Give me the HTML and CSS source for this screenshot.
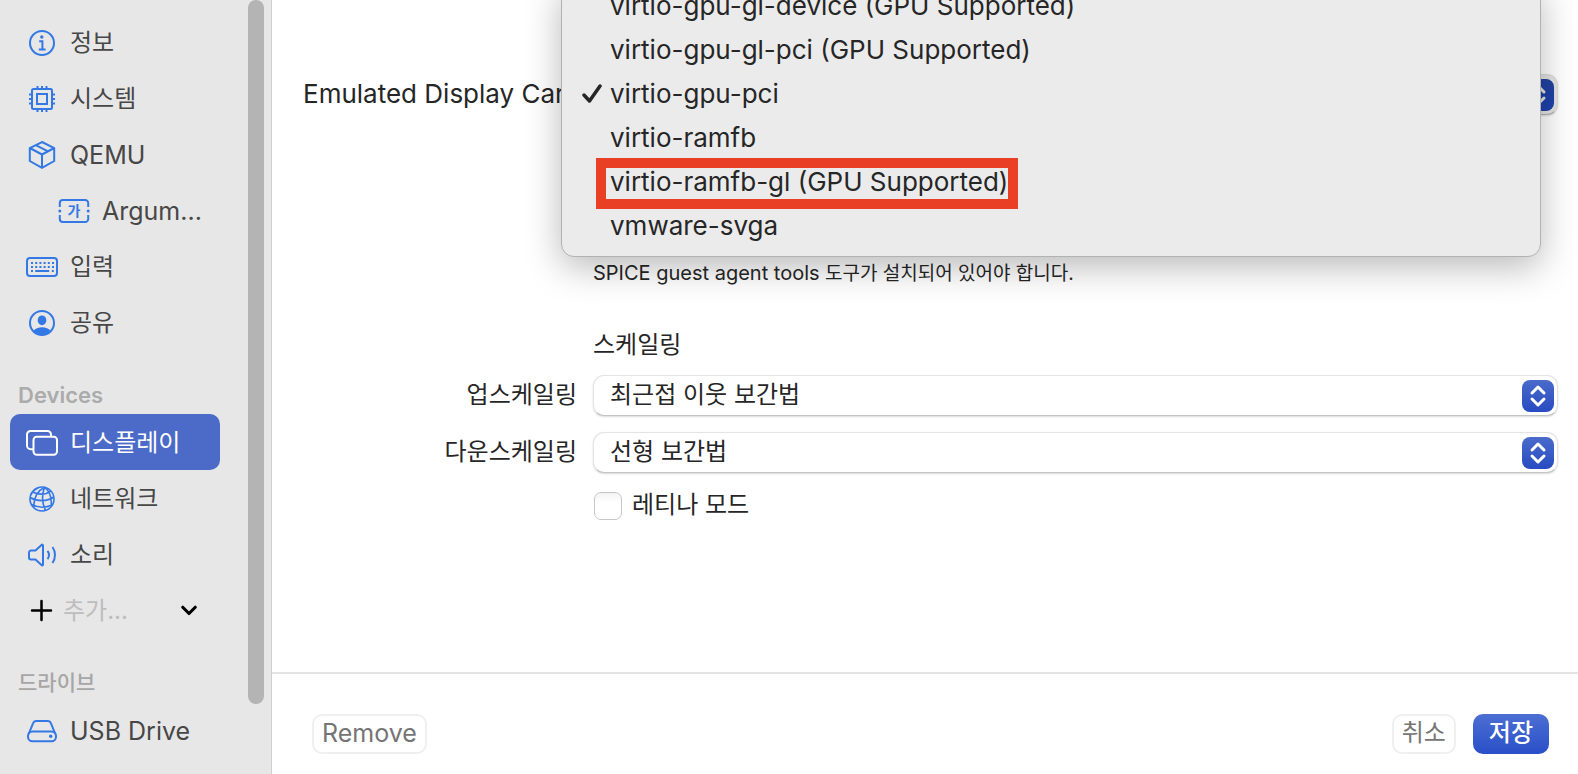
FILE: index.html
```html
<!DOCTYPE html>
<html lang="ko">
<head>
  <meta charset="UTF-8" />
  <meta name="viewport" content="width=device-width, initial-scale=1" />
  <title>디스플레이</title>
  <link rel="stylesheet" href="styles.css">
</head>
<body>

  <aside class="sidebar">
    <nav>
      <a href="#info">
        <svg class="icon" viewBox="0 0 32 32"><circle cx="16" cy="16" r="12"/><circle class="fill" cx="15.8" cy="10" r="1.7"/><path d="M13.2 14.3h3.2v7.6M12.8 22.4h6.8"/></svg>
        <span>정보</span>
      </a>
      <a href="#system">
        <svg class="icon" viewBox="0 0 32 32"><rect x="6" y="6" width="20" height="20" rx="1.5"/><rect x="11" y="11" width="10" height="10"/><path d="M11.5 3v3M16 3v3M20.5 3v3M11.5 26v3M16 26v3M20.5 26v3M3 11.5h3M3 16h3M3 20.5h3M26 11.5h3M26 16h3M26 20.5h3"/></svg>
        <span>시스템</span>
      </a>
      <a href="#qemu">
        <svg class="icon" viewBox="0 0 32 32"><path d="M16 3 28.2 9v13L16 28.8 3.8 22V9ZM3.8 9 16 15.5 28.2 9M16 15.5v13M9.8 6.1 22 12.3"/></svg>
        <span class="latin">QEMU</span>
      </a>
      <a class="child" href="#arguments">
        <svg class="icon" viewBox="0 0 32 32"><path d="M1.8 12V8a3 3 0 0 1 3-3h22.4a3 3 0 0 1 3 3v4M1.8 20v4a3 3 0 0 0 3 3h22.4a3 3 0 0 0 3-3v-4"/><circle class="fill" cx="1.8" cy="16" r="1.5"/><circle class="fill" cx="30.2" cy="16" r="1.5"/><text x="16" y="21">가</text></svg>
        <span class="latin">Argum...</span>
      </a>
      <a href="#input">
        <svg class="icon" viewBox="0 0 32 32"><rect x="1" y="7" width="30" height="18" rx="3"/><path stroke-dasharray="2 2.2" d="M5 12h23M5 16h23"/><path d="M5 20h2M9.2 20h14M25.8 20h2"/></svg>
        <span>입력</span>
      </a>
      <a href="#sharing">
        <svg class="icon" viewBox="0 0 32 32"><circle cx="16" cy="16" r="12"/><ellipse class="fill" cx="16" cy="13.3" rx="4.3" ry="4.9"/><path class="fill" d="M7.5 24c1.5-2.5 5-3.7 8.5-3.7s7 1.2 8.5 3.7A12 12 0 0 1 7.5 24Z"/></svg>
        <span>공유</span>
      </a>

      <h2 class="devices">Devices</h2>
      <a class="active" href="#display">
        <svg class="icon" viewBox="0 0 32 32"><rect x="7.5" y="9.8" width="23.5" height="18" rx="3.2"/><path d="M7 22.2H4.6A3.6 3.6 0 0 1 1 18.6V7.6A3.6 3.6 0 0 1 4.6 4h16.8A3.6 3.6 0 0 1 25 7.6V9"/></svg>
        <span>디스플레이</span>
      </a>
      <a href="#network">
        <svg class="icon thin" viewBox="0 0 32 32"><circle cx="16" cy="16" r="12"/><path d="M18.5 4.2C11 8 7.5 15 7.8 24.5M18.5 4.2c-2.5 7-2.5 16 1 23.2M18.5 4.2c5.5 4.5 7.5 11.5 6.5 19M13 4.4C9 6.5 6 9.5 4.6 12M6.5 9c6.5 3 13 3 18.5-1.2M4 14.5c7 4 17 4.5 23.8-.5M5.5 21.5c6 3 14 3.5 20.5.5"/></svg>
        <span>네트워크</span>
      </a>
      <a href="#sound">
        <svg class="icon" viewBox="0 0 32 32"><path d="M17 6.5v19c0 1-.8 1.2-1.5.6L9.5 20.5H5A2 2 0 0 1 3 18.5v-5A2 2 0 0 1 5 11.5h4.5l6-5.6c.7-.6 1.5-.4 1.5.6ZM21.5 11.8c1.8 2.5 1.8 5.9 0 8.4M26.5 8c3.3 4.7 3.3 11.3 0 16"/></svg>
        <span>소리</span>
      </a>
      <button class="add" type="button">
        <svg class="icon" viewBox="0 0 32 32"><path d="M15.5 6v19M6 15.5h19"/></svg>
        <span>추가...</span>
        <svg class="chevron" viewBox="0 0 16 16"><path d="m3 5 5 5 5-5"/></svg>
      </button>

      <h2>드라이브</h2>
      <a href="#usb">
        <svg class="icon" viewBox="0 0 32 32"><rect x="2" y="16.5" width="28" height="9.8" rx="4.5"/><path d="M2.7 19 7 8.3A3.5 3.5 0 0 1 10 6h12a3.5 3.5 0 0 1 3 2.3L29.3 19"/><circle class="fill" cx="24.7" cy="21.3" r="1.7"/></svg>
        <span class="latin">USB Drive</span>
      </a>
    </nav>
    <div class="scrollbar"></div>
  </aside>

  <main>
    <form class="settings">
      <label class="card-label" for="card">Emulated Display Card</label>
      <div class="picker open">
        <select id="card">
          <option>virtio-gpu-pci</option>
        </select>
        <svg class="stepper" viewBox="0 0 32 32"><path d="m10 13 6-6 6 6M10 19l6 6 6-6"/></svg>
        <div class="menu" role="listbox" aria-label="Emulated Display Card">
          <button type="button" role="option"><span>virtio-gpu-gl-device (GPU Supported)</span></button>
          <button type="button" role="option"><span>virtio-gpu-gl-pci (GPU Supported)</span></button>
          <button type="button" role="option" aria-selected="true">
            <svg class="check" viewBox="0 0 20 20"><path d="m2 11 5.5 6L18 2"/></svg>
            <span>virtio-gpu-pci</span>
          </button>
          <button type="button" role="option"><span>virtio-ramfb</span></button>
          <button type="button" role="option"><span class="highlight">virtio-ramfb-gl (GPU Supported)</span></button>
          <button type="button" role="option"><span>vmware-svga</span></button>
        </div>
      </div>

      <p class="note"><span class="latin">SPICE guest agent tools</span> 도구가 설치되어 있어야 합니다.</p>

      <h3>스케일링</h3>

      <label for="upscale">업스케일링</label>
      <div class="picker">
        <select id="upscale">
          <option>최근접 이웃 보간법</option>
          <option>선형 보간법</option>
        </select>
        <svg class="stepper" viewBox="0 0 32 32"><path d="m10 13 6-6 6 6M10 19l6 6 6-6"/></svg>
      </div>

      <label for="downscale">다운스케일링</label>
      <div class="picker">
        <select id="downscale">
          <option>선형 보간법</option>
          <option>최근접 이웃 보간법</option>
        </select>
        <svg class="stepper" viewBox="0 0 32 32"><path d="m10 13 6-6 6 6M10 19l6 6 6-6"/></svg>
      </div>

      <label class="checkbox"><input type="checkbox"> <span>레티나 모드</span></label>
    </form>

    <footer>
      <button class="latin" type="button">Remove</button>
      <div class="actions">
        <button type="button">취소</button>
        <button class="primary" type="button">저장</button>
      </div>
    </footer>
  </main>

</body>
</html>
```

FILE: styles.css
```css
* {
  box-sizing: border-box;
}

body {
  margin: 0;
  height: 100vh;
  display: flex;
  overflow: hidden;
  background: #fff;
  color: #262626;
  font-family: 'Inter', 'Noto Sans CJK KR', sans-serif;
  font-size: 24px;
  line-height: 32px;
}

button, select, input {
  font: inherit;
  color: inherit;
}

.latin {
  font-size: 25px;
}

/* Sidebar */
.sidebar {
  flex: none;
  width: 272px;
  display: flex;
  padding-right: 7px;
  background: #e7e7e7;
  border-right: 1px solid #cfcfcf;
}

nav {
  flex: 1;
  padding: 14px 28px 0 10px;
}

nav a,
.add {
  display: flex;
  align-items: center;
  gap: 12px;
  width: 100%;
  height: 56px;
  padding: 2px 16px 0;
  border: 0;
  border-radius: 10px;
  background: none;
  color: #474747;
  text-decoration: none;
  text-align: left;
  white-space: nowrap;
}

nav a.child {
  padding: 2px 0 0 48px;
}

nav a.active {
  background: #4c6bc8;
  color: #fff;
}

nav h2 {
  height: 64px;
  margin: 0;
  padding: 29px 8px 0;
  font-size: 21px;
  font-weight: 500;
  color: #a6a6a6;
}

nav .devices {
  font-size: 22px;
  font-weight: 600;
  color: #ababab;
}

.icon {
  flex: none;
  width: 32px;
  height: 32px;
  fill: none;
  stroke: #3478e5;
  stroke-width: 2;
}

.icon .fill {
  fill: #3478e5;
  stroke: none;
}

.icon text {
  fill: #3478e5;
  stroke: none;
  font-size: 14px;
  font-weight: 700;
  text-anchor: middle;
}

.thin {
  stroke-width: 1.6;
}

.active .icon {
  stroke: #fff;
}

.add {
  gap: 5px;
  color: #bdbdbd;
}

.add .icon {
  stroke: #000;
  stroke-width: 2.5;
  stroke-linecap: round;
}

.chevron {
  width: 20px;
  height: 20px;
  margin-left: auto;
  margin-right: 5px;
  fill: none;
  stroke: #000;
  stroke-width: 2.5;
  stroke-linecap: round;
  stroke-linejoin: round;
}

.scrollbar {
  width: 16px;
  height: 91%;
  background: #b4b4b4;
  border-radius: 8px;
}

/* Settings form */
main {
  flex: 1;
  display: flex;
  flex-direction: column;
}

.settings {
  flex: 1;
  display: grid;
  grid-template-columns: 289px 1fr;
  column-gap: 16px;
  align-content: start;
  padding: 74px 20px 0 16px;
}

.settings > label {
  height: 57px;
  line-height: 40px;
  text-align: right;
  white-space: nowrap;
}

.settings .card-label {
  padding-left: 15px;
  font-size: 26px;
  text-align: left;
}

.picker {
  position: relative;
  display: grid;
  height: 41px;
}

.picker select {
  grid-area: 1 / 1;
  width: 100%;
  padding: 0 44px 2px 16px;
  border: 1px solid #e4e4e4;
  border-bottom-color: #c4c4c4;
  border-radius: 11px;
  background: #fff;
  box-shadow: 0 1px 2px rgba(0, 0, 0, 0.15);
  appearance: none;
}

.stepper {
  grid-area: 1 / 1;
  place-self: center end;
  width: 32px;
  height: 32px;
  margin-right: 4px;
  border-radius: 8px;
  background: linear-gradient(#4a6bca, #274bc1);
  fill: none;
  stroke: #fff;
  stroke-width: 3;
  stroke-linecap: round;
  stroke-linejoin: round;
  pointer-events: none;
}

.open select {
  background: #e4e4e4;
  border-color: #dcdcdc;
  border-bottom-color: #b4b4b4;
}

.open .stepper {
  background: linear-gradient(#2142a0, #1f42ae);
  stroke: #e4e4e4;
}

/* Open drop-down list */
.menu {
  position: absolute;
  left: -32px;
  right: 17px;
  bottom: -142px;
  padding-bottom: 8px;
  background: #ebebeb;
  border: 1px solid #b2b2b2;
  border-radius: 0 0 13px 13px;
  box-shadow: 0 10px 36px rgba(0, 0, 0, 0.28);
  font-size: 26px;
}

.menu button {
  display: flex;
  align-items: center;
  width: 100%;
  height: 44px;
  padding: 0 0 0 48px;
  border: 0;
  background: none;
  text-align: left;
}

.check {
  width: 20px;
  height: 20px;
  margin-left: -28px;
  margin-right: 8px;
  fill: none;
  stroke: #262626;
  stroke-width: 3.5;
  stroke-linecap: round;
  stroke-linejoin: round;
}

.highlight {
  margin: 0 0 -3px -4px;
  padding: 0 0 3px 4px;
  line-height: 28px;
  outline: 10px solid #e93f25;
}

.note,
.settings h3,
.settings .checkbox {
  grid-column: 2;
  margin: 0;
}

.note {
  padding-top: 126px;
  font-size: 19px;
}

.note .latin {
  font-size: 20px;
}

.settings h3 {
  height: 85px;
  padding-top: 39px;
  font-size: 24px;
  font-weight: 400;
}

.settings .checkbox {
  display: flex;
  align-items: center;
  gap: 10px;
  height: 32px;
  text-align: left;
}

.checkbox input {
  width: 28px;
  height: 28px;
  margin: 2px 0 0 1px;
  border: 1px solid #c6c6c6;
  border-radius: 7px;
  background: linear-gradient(#f4f4f4, #fff 40%);
  appearance: none;
}

/* Footer buttons */
footer {
  display: flex;
  justify-content: space-between;
  padding: 40px 29px 20px 40px;
  border-top: 2px solid #e4e4e4;
}

.actions {
  display: flex;
  gap: 17px;
}

footer button {
  height: 40px;
  padding: 0 8px 3px;
  border: 2px solid #f0f0f0;
  border-radius: 10px;
  background: #fff;
  color: #757575;
  line-height: 32px;
}

footer .primary {
  padding: 0 16px 3px;
  border: 0;
  background: linear-gradient(#4c6fd3, #294fc8);
  color: #fff;
  font-weight: 500;
}
```
